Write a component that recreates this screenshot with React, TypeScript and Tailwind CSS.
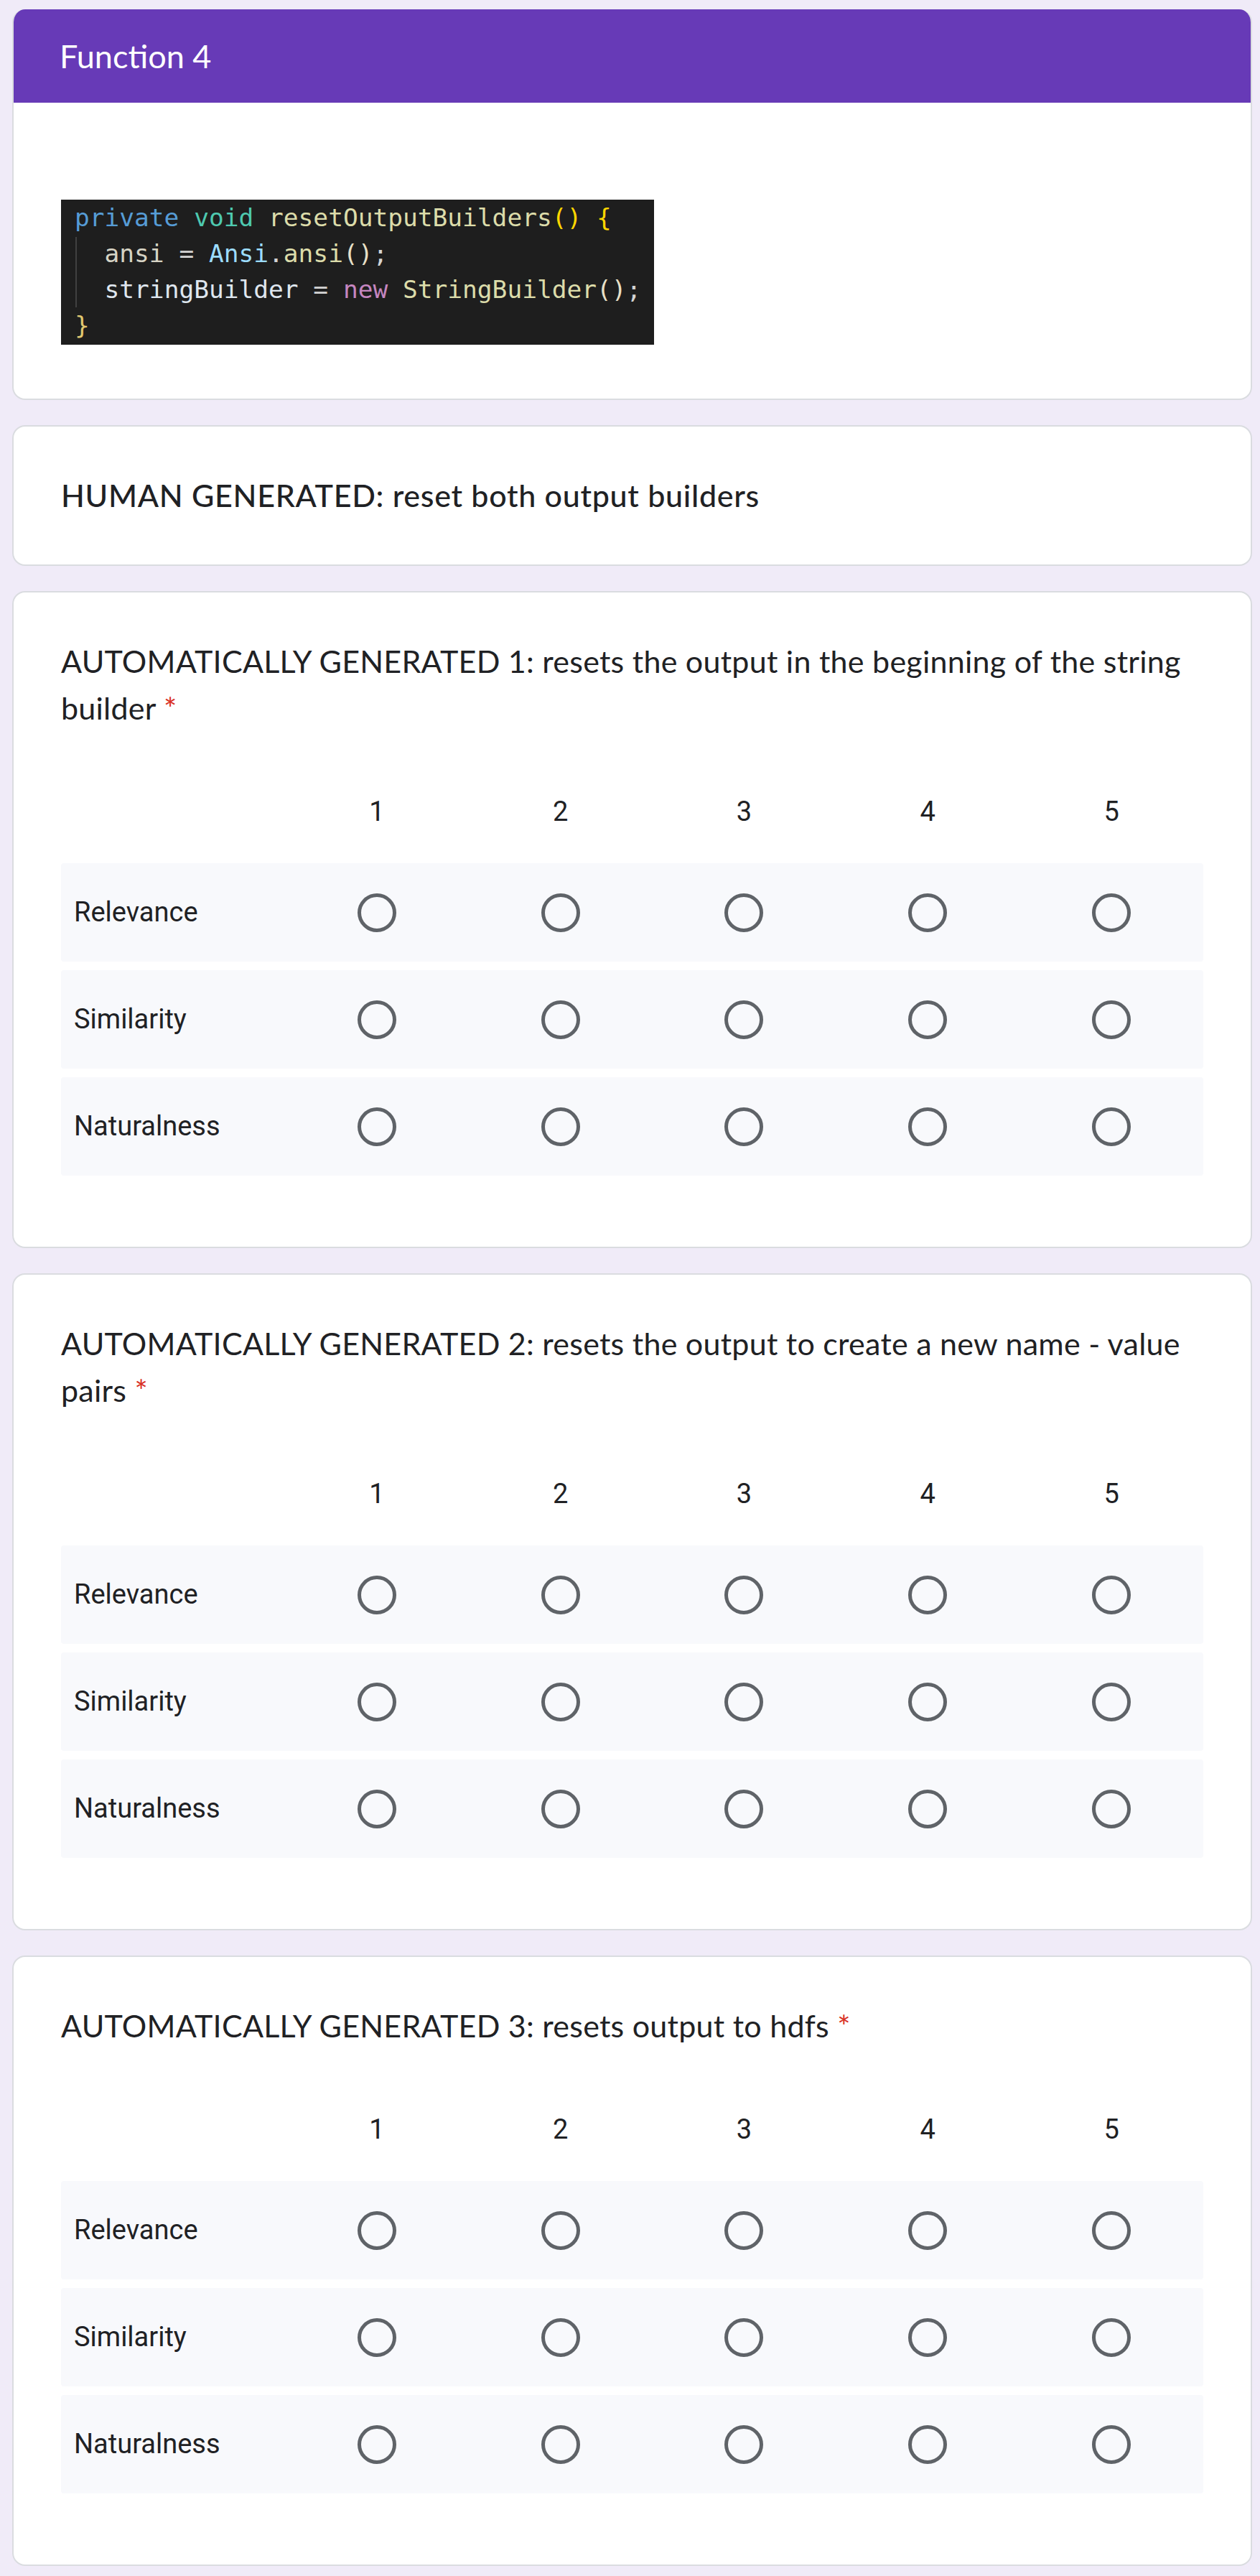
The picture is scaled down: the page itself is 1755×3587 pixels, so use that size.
const TITLE_FONT = "font-['Lato','Open_Sans',sans-serif]";

const ROWS = ['Relevance', 'Similarity', 'Naturalness'];
const COLS = [1, 2, 3, 4, 5];

const QUESTIONS = [
  'AUTOMATICALLY GENERATED 1: resets the output in the beginning of the string builder',
  'AUTOMATICALLY GENERATED 2: resets the output to create a new name - value pairs',
  'AUTOMATICALLY GENERATED 3: resets output to hdfs',
];

function CodeSnippet() {
  return (
    <div className="relative w-[826px] h-[202px] bg-[#1e1e1e] pl-[19px] font-['DejaVu_Sans_Mono','Liberation_Mono',monospace] text-[34.5px] leading-[50px] whitespace-pre text-[#d4d4d4]">
      {/* indent guide */}
      <div className="absolute left-[20px] top-[52px] h-[98px] w-[2px] bg-[#404040]" />
      <div>
        <span className="text-[#569cd6]">private</span>{' '}
        <span className="text-[#4ec9b0]">void</span>{' '}
        <span className="text-[#dcdcaa]">resetOutputBuilders</span>
        <span className="text-[#ffd700]">()</span>{' '}
        <span className="text-[#ffd700]">{'{'}</span>
      </div>
      <div>
        {'  '}
        <span className="text-[#d6d3c4]">ansi</span> = <span className="text-[#9cdcfe]">Ansi</span>.
        <span className="text-[#dcdcaa]">ansi</span>
        <span className="text-[#e8e0c8]">()</span>;
      </div>
      <div>
        {'  '}
        <span className="text-[#dfe6ee]">stringBuilder</span> = <span className="text-[#c586c0]">new</span>{' '}
        <span className="text-[#dcdcaa]">StringBuilder</span>
        <span className="text-[#e8e0c8]">()</span>;
      </div>
      <div>
        <span className="text-[#e0c870]">{'}'}</span>
      </div>
    </div>
  );
}

function Radio() {
  return <div className="h-[54px] w-[54px] rounded-full border-[5px] border-[#5f6368]" />;
}

function GridQuestion({ title }: { title: string }) {
  return (
    <div className="rounded-[18px] border-2 border-[#dadce0] bg-white px-[66px] pt-[63px] pb-[99px]">
      <div className={`${TITLE_FONT} text-[43px] leading-[65px] tracking-[0.25px] text-[#202124]`}>
        {title} <span className="text-[#d93025]">*</span>
      </div>
      <div className="mt-[40px] font-['Roboto',sans-serif] text-[38px] text-[#202124]">
        <div className="grid h-[144px] grid-cols-[312px_repeat(5,1fr)] items-center">
          <div />
          {COLS.map((c) => (
            <div key={c} className="text-center">
              {c}
            </div>
          ))}
        </div>
        <div className="flex flex-col gap-[12px]">
          {ROWS.map((r) => (
            <div
              key={r}
              className="grid h-[137px] grid-cols-[312px_repeat(5,1fr)] items-center rounded-[4px] bg-[#f8f9fc]"
            >
              <div className="pl-[18px]">{r}</div>
              {COLS.map((c) => (
                <div key={c} className="flex justify-center">
                  <Radio />
                </div>
              ))}
            </div>
          ))}
        </div>
      </div>
    </div>
  );
}

export default function App() {
  return (
    <div className="min-h-screen bg-[#f0ebf8] pt-[13px] pb-[11px]">
      <div className="ml-[17px] mr-[11px] flex flex-col gap-[35px]">
        {/* Section header */}
        <div className="overflow-hidden rounded-[18px] border-2 border-t-0 border-[#dadce0] bg-white">
          <div className="-mx-[2px] flex h-[130px] items-center bg-[#673ab7] px-[66px]">
            <div className={`${TITLE_FONT} text-[45px] leading-[65px] text-white`}>Function 4</div>
          </div>
          <div className="px-[66px] pt-[135px] pb-[75px]">
            <CodeSnippet />
          </div>
        </div>

        {/* Human generated */}
        <div className="rounded-[18px] border-2 border-[#dadce0] bg-white px-[66px] pt-[63px] pb-[64px]">
          <div className={`${TITLE_FONT} text-[43px] font-medium leading-[65px] tracking-[0.7px] text-[#202124]`}>
            HUMAN GENERATED: reset both output builders
          </div>
        </div>

        {QUESTIONS.map((q) => (
          <GridQuestion key={q} title={q} />
        ))}
      </div>
    </div>
  );
}
